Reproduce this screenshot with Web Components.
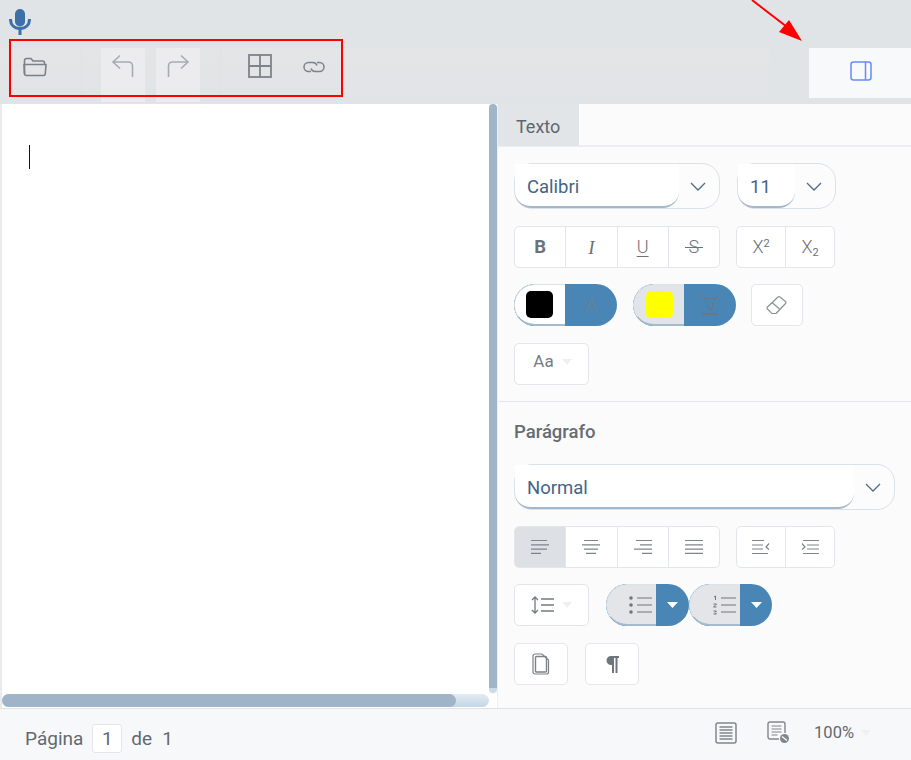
<!DOCTYPE html>
<html lang="pt">
<head>
<meta charset="utf-8">
<title>Editor</title>
<style>
  html, body { margin: 0; padding: 0; height: 100%; background: #e1e4e7; font-family: Roboto, "Liberation Sans", sans-serif; }
</style>
</head>
<body>
<doc-app></doc-app>

<script>
// shared look of the small square icons
const ICONS = {
    mic: '<svg width="22" height="26" viewBox="0 0 22 26"><rect x="6" y="0" width="10" height="17.500" rx="5" fill="#3d70a8"/><path d="M1.500 10c0 6 4 9.500 9.500 9.500s9.500-3.500 9.500-9.500" fill="none" stroke="#3d70a8" stroke-width="3"/><path d="M11 19v7" stroke="#3d70a8" stroke-width="3"/></svg>',
    folder: '<svg width="24" height="20" viewBox="0 0 24 20" fill="none" stroke="#7b8189" stroke-width="1.6" stroke-linejoin="round"><path d="M1.500 17V3.500A2 2 0 0 1 3.500 1.500h4.500l2 2.500h9.500a2 2 0 0 1 2 2V7"/><path d="M1 7.500h22l-.7 9a2 2 0 0 1-2 2H3.500a2 2 0 0 1-2-2z"/></svg>',
    undo: '<svg width="24" height="24" viewBox="0 0 24 24" fill="none" stroke="#a6abb0" stroke-width="1.600"><path d="M9 1.500L2 8l7 6.500"/><path d="M2 8h15.500a4 4 0 0 1 4 4v11"/></svg>',
    redo: '<svg width="24" height="24" viewBox="0 0 24 24" fill="none" stroke="#a6abb0" stroke-width="1.600"><path d="M15 1.500L22 8l-7 6.500"/><path d="M22 8H6.500a4 4 0 0 0-4 4v11"/></svg>',
    table: '<svg width="24" height="24" viewBox="0 0 24 24" fill="none" stroke="#7d8389" stroke-width="1.800"><rect x="1" y="1" width="22" height="22"/><path d="M12 1v22M1 12h22"/></svg>',
    link: '<svg width="22" height="12" viewBox="0 0 22 12" fill="none" stroke="#7d8389" stroke-width="1.500"><path d="M8 10.500H5.500a4.500 4.500 0 0 1 0-9H10a4.500 4.500 0 0 1 4 3"/><path d="M14 1.500h2.500a4.500 4.500 0 0 1 0 9H12a4.500 4.500 0 0 1-4-3"/></svg>',
    panel: '<svg width="22" height="20" viewBox="0 0 22 20" fill="none" stroke="#668bfa" stroke-width="1.500"><rect x="1" y="1" width="20" height="18" rx="2.500"/><path d="M15.500 1v18"/></svg>',
    chevron: '<svg width="16" height="9" viewBox="0 0 16 9" fill="none" stroke="#4f6b85" stroke-width="1.300"><path d="M1 1l7 7 7-7"/></svg>',
    eraser: '<svg width="22" height="20" viewBox="0 0 22 20" fill="none" stroke="#8a8f96" stroke-width="1.200" stroke-linejoin="round"><path d="M1.500 12L12 2a1.500 1.500 0 0 1 2 0l5.500 4.500a1.500 1.500 0 0 1 0 2L10 18.500H6.500a1.500 1.500 0 0 1-1-.4L1.500 14a1.500 1.500 0 0 1 0-2z"/><path d="M6 7.500l7.500 6.500"/></svg>',
    highlight: '<svg width="18" height="22" viewBox="0 0 18 22" fill="none" stroke="#6c7680" stroke-width="1"><path d="M1 0c0 3 2 4.500 4 4.500h8c2 0 4-1.500 4-4.500"/><path d="M4 4.500l2.500 5.500v4h5v-4L14 4.500"/><path d="M7.500 14l1.500 2.500 1.500-2.500"/><path d="M1 20h16" stroke-width="2.200"/></svg>',
    lines: (rows) => '<svg width="18" height="16" viewBox="0 0 18 16" stroke="#7f858b" stroke-width="1.200">' + rows.map((r, i) => `<path d="M${r[0]} ${1.500 + i * 4.300}H${r[1]}"/>`).join('') + '</svg>',
    outdent: '<svg width="18" height="16" viewBox="0 0 18 16" fill="none" stroke="#7f858b" stroke-width="1.200"><path d="M0 1.500h12M0 6h11M0 10h11M0 14.500h16"/><path d="M17 4.500L14 8l3 2.500" /></svg>',
    indent: '<svg width="18" height="16" viewBox="0 0 18 16" fill="none" stroke="#7f858b" stroke-width="1.200"><path d="M2 1.500h16M6 6h12M6 10h12M2 14.500h16"/><path d="M1 4.500L4 8l-3 2.500"/></svg>',
    spacing: '<svg width="24" height="18" viewBox="0 0 24 18" fill="none" stroke="#737a82" stroke-width="1.300"><path d="M4 1v16M1 4l3-3 3 3M1 14l3 3 3-3"/><path d="M10 3h13M10 9h13M10 15h13" stroke-width="1.600"/></svg>',
    bullets: '<svg width="24" height="20" viewBox="0 0 24 20" stroke="#6f767d" stroke-width="1.200"><circle cx="3" cy="3" r="1.800" fill="#6f767d" stroke="none"/><circle cx="3" cy="10" r="1.800" fill="#6f767d" stroke="none"/><circle cx="3" cy="17" r="1.800" fill="#6f767d" stroke="none"/><path d="M9 3h15M9 10h15M9 17h15"/></svg>',
    numbers: '<svg width="24" height="20" viewBox="0 0 24 20" stroke="#6f767d" stroke-width="1.200" fill="none"><path d="M2 2l1.500-1v4M1.500 9h3l-3 3h3M1.500 16h3l-1.500 1.500 1.500 1.500h-3" stroke-width="1"/><path d="M9 3h15M9 10h15M9 17h15"/></svg>',
    pages: '<svg width="18" height="22" viewBox="0 0 18 22" fill="none" stroke="#7d838a" stroke-width="1.200"><path d="M1 3a2 2 0 0 1 2-2h7l6.500 6v12a2 2 0 0 1-2 2H3a2 2 0 0 1-2-2z"/><rect x="3.500" y="3.500" width="11" height="15.500" rx="1" stroke-width="1.400"/></svg>',
    pilcrow: '<svg width="14" height="18" viewBox="0 0 14 18"><path d="M6 1h8v2h-1.500v15H10.500V3H9v15H7V10H6A4.500 4.500 0 0 1 6 1z" fill="#6e757c"/></svg>',
    caret: '<svg width="11" height="6" viewBox="0 0 11 6"><path d="M0 0h11L5.500 6z" fill="#fff"/></svg>',
    fadeCaret: '<svg width="10" height="6" viewBox="0 0 10 6"><path d="M0 0h10L5 6z" fill="#eef0f2"/></svg>',
    printLayout: '<svg width="22" height="22" viewBox="0 0 22 22" fill="none" stroke="#80868c"><rect x="1" y="1" width="20" height="20" rx="2" stroke-width="1.500"/><path d="M4.500 5h13M4.500 8h13M4.500 11h13M4.500 14h13M4.500 17h13" stroke-width="1.400"/></svg>',
    webLayout: '<svg width="23" height="23" viewBox="0 0 23 23" fill="none" stroke="#80868c"><path d="M12 18H3a2 2 0 0 1-2-2V3a2 2 0 0 1 2-2h13a2 2 0 0 1 2 2v9" stroke-width="1.400"/><path d="M4.500 5h10M4.500 8h10M4.500 11h10M4.500 14h6" stroke-width="1.200"/><circle cx="17.500" cy="17.500" r="4.500" fill="#80868c" stroke="none"/><path d="M15 15.500l5 4" stroke="#fff" stroke-width="1.200"/></svg>'
};

class DocApp extends HTMLElement {
    constructor() {
        super();
        this.attachShadow({ mode: 'open' });
        this.shadowRoot.innerHTML = `
            <style>
                :host { display: flex; flex-direction: column; position: relative; width: 911px; height: 760px; overflow: hidden; }
                .body { display: flex; height: 604px; }
                .annot-box { position: absolute; left: 9px; top: 39px; width: 330px; height: 54px; border: 2px solid #f00; }
                .annot-arrow { position: absolute; left: 745px; top: 0; }
            </style>
            <doc-toolbar></doc-toolbar>
            <div class="body">
                <doc-editor></doc-editor>
                <doc-panel></doc-panel>
            </div>
            <doc-status></doc-status>
            <div class="annot-box"></div>
            <svg class="annot-arrow" width="62" height="44" viewBox="0 0 62 44">
                <path d="M7 0L46 30" stroke="#f00" stroke-width="2"/>
                <path d="M57 41L34 32L44 20z" fill="#f00"/>
            </svg>
        `;
    }
}

class DocToolbar extends HTMLElement {
    constructor() {
        super();
        this.attachShadow({ mode: 'open' });
        this.shadowRoot.innerHTML = `
            <style>
                :host { display: block; height: 104px; background: #e1e4e7; }
                .mic { height: 48px; padding: 9px 0 0 9px; box-sizing: border-box; line-height: 0; }
                .row { display: flex; height: 50px; }
                .band { display: flex; align-items: flex-start; width: 769px; height: 50px; background: linear-gradient(#e4e5e6 0, #e3e4e6 40%, #e1e4e7 100%); }
                .tool { display: flex; align-items: flex-start; justify-content: center; height: 54px; box-sizing: border-box; line-height: 0; }
                .off { background: #ececee; width: 44px; padding-top: 6px; }
                .sep { width: 1px; height: 50px; background: #dfe1e3; }
                .toggle { margin-left: 40px; width: 102px; height: 50px; box-sizing: border-box; padding: 0 0 4px 2px; display: flex; align-items: center; justify-content: center; background: #f8f9fb; line-height: 0; }
            </style>
            <div class="mic">${ICONS.mic}</div>
            <div class="row">
                <div class="band">
                    <div class="tool" style="width:69px;padding-top:9px">${ICONS.folder}</div>
                    <div class="sep" style="margin-left:12px"></div>
                    <div class="tool off" style="margin-left:19px">${ICONS.undo}</div>
                    <div class="tool off" style="margin-left:11px">${ICONS.redo}</div>
                    <div class="sep" style="margin-left:20px"></div>
                    <div class="tool" style="width:78px;padding-top:6px">${ICONS.table}</div>
                    <div class="tool" style="width:30px;padding-top:13px">${ICONS.link}</div>
                </div>
                <div class="toggle">${ICONS.panel}</div>
            </div>
        `;
    }
}

class DocEditor extends HTMLElement {
    constructor() {
        super();
        this.attachShadow({ mode: 'open' });
        this.shadowRoot.innerHTML = `
            <style>
                :host { display: flex; flex-direction: column; width: 498px; background: #e9ebee; box-sizing: border-box; padding-left: 2px; border-right: 1px solid #eceef0; }
                .top { display: flex; height: 590px; flex: none; }
                .page { width: 487px; background: #fff; padding: 41px 0 0 27px; box-sizing: border-box; }
                .cursor { width: 1px; height: 24px; background: #111; }
                .gutter { width: 8px; background: #fafafb; }
                .vbar { width: 8px; height: 589px; background: linear-gradient(#a0b5c7 0, #a0b5c7 584px, #cbdbe7 584px); border-radius: 4px; }
                .bottom { flex: 1; display: flex; flex-direction: column; background: #fff; }
                .track { display: flex; width: 487px; height: 13px; flex: none; background: linear-gradient(#e3ecf3, #c3d5e4); border-radius: 7px; }
                .thumb { width: 454px; height: 13px; background: #9fb4c6; border-radius: 7px; }
                .wrap { display: flex; flex: 1; }
            </style>
            <div class="top">
                <div class="page"><div class="cursor"></div></div>
                <div class="gutter"><div class="vbar"></div></div>
            </div>
            <div class="bottom">
                <div class="wrap"><div class="track"><div class="thumb"></div></div></div>
            </div>
        `;
    }
}

class DocSelect extends HTMLElement {
    constructor() {
        super();
        this.attachShadow({ mode: 'open' });
        const w = this.getAttribute('width');
        const fw = this.getAttribute('field');
        this.shadowRoot.innerHTML = `
            <style>
                :host { display: block; width: ${w}px; height: 46px; box-sizing: border-box; border: 1px solid #dbe1e8; border-radius: 18px; background: #fcfcfd; position: relative; }
                .field { width: ${fw}px; height: 44px; box-sizing: border-box; padding: 11.500px 0 0 12px; font-size: 18.500px; line-height: 22px; color: #446486; border-bottom: 2px solid #a3b8cb; border-radius: 0 0 16px 16px; background: #fff; }
                .chev { position: absolute; right: 13px; top: 18px; line-height: 0; }
            </style>
            <div class="field"><slot></slot></div>
            <div class="chev">${ICONS.chevron}</div>
        `;
    }
}

class DocGroup extends HTMLElement {
    constructor() {
        super();
        this.attachShadow({ mode: 'open' });
        this.shadowRoot.innerHTML = `
            <style>
                :host { display: flex; height: 42px; box-sizing: border-box; border: 1px solid #e3e6ea; border-radius: 5px; background: #fff; overflow: hidden; }
            </style>
            <slot></slot>
        `;
    }
}

class DocBtn extends HTMLElement {
    constructor() {
        super();
        this.attachShadow({ mode: 'open' });
        this.shadowRoot.innerHTML = `
            <style>
                :host { display: flex; align-items: center; justify-content: center; flex: 1; min-width: 0; height: 100%; border-left: 1px solid #e3e6ea; color: #6b7279; font-size: 18px; font-weight: 300; line-height: 1; }
                :host(:first-child) { border-left: 0; }
                :host([active]) { background: #dde0e4; }
            </style>
            <slot></slot>
        `;
    }
}

// blue split pill: colour swatch or list icon on the left, blue part on the right
class DocPill extends HTMLElement {
    constructor() {
        super();
        this.attachShadow({ mode: 'open' });
        const leftW = this.getAttribute('left');
        const w = this.getAttribute('width');
        this.shadowRoot.innerHTML = `
            <style>
                :host { display: flex; width: ${w}px; height: 42px; border-radius: 21px; overflow: hidden; background: #4a86b5; }
                .l { width: ${leftW}px; flex: none; box-sizing: border-box; display: flex; align-items: center; justify-content: var(--left-align, center); padding-right: var(--left-pad, 0); border: 1px solid #dfe3e8; border-right: 0; border-bottom: 2px solid #a5bacc; border-radius: 21px 0 0 21px; background: var(--left-bg, #fff); line-height: 0; }
                .r { flex: 1; display: flex; align-items: center; justify-content: center; color: #6e7f8e; font-size: 19px; font-weight: 300; line-height: 0; }
            </style>
            <div class="l"><slot name="left"></slot></div>
            <div class="r"><slot name="right"></slot></div>
        `;
    }
}

class DocPanel extends HTMLElement {
    constructor() {
        super();
        this.attachShadow({ mode: 'open' });
        const swatch = (c) => `<span slot="left" style="display:block;width:27px;height:27px;border-radius:5px;background:${c}"></span>`;
        const cell = (svg, attr) => `<doc-btn ${attr || ''}>${svg}</doc-btn>`;
        this.shadowRoot.innerHTML = `
            <style>
                :host { display: flex; flex-direction: column; flex: 1; background: #fbfbfc; font-family: Roboto, "Liberation Sans", sans-serif; }
                .tabs { height: 43px; flex: none; box-sizing: border-box; border-bottom: 2px solid #eceef1; }
                .tab { width: 81px; height: 42px; box-sizing: border-box; background: #e2e5e8; color: #5f666e; font-size: 18px; line-height: 46px; padding-left: 18px; }
                .sec { padding: 16px 16px 0; display: flex; flex-direction: column; }
                .sec.one { height: 255px; flex: none; box-sizing: border-box; border-bottom: 1px solid #e3e6ea; }
                .row { display: flex; flex: none; }
                h2 { margin: 0; font-size: 18.500px; line-height: 20px; font-weight: 500; color: #666c73; height: 46px; padding-top: 4px; box-sizing: border-box; }
                .box { flex: none; height: 42px; box-sizing: border-box; border: 1px solid #e3e6ea; border-radius: 5px; background: #fff; display: flex; align-items: center; justify-content: center; line-height: 0; color: #7a8087; }
                .strike { display: inline-block; padding: 0 4px; background: linear-gradient(#6b7279, #6b7279) center 55% / 100% 1px no-repeat; }
            </style>
            <div class="tabs"><div class="tab">Texto</div></div>
            <div class="sec one">
                <div class="row" style="gap:17px">
                    <doc-select width="206" field="164">Calibri</doc-select>
                    <doc-select width="99" field="57">11</doc-select>
                </div>
                <div class="row" style="margin-top:17px;gap:16px">
                    <doc-group style="width:206px">
                        <doc-btn><b style="font-weight:700;font-size:18.500px">B</b></doc-btn>
                        <doc-btn><i style="font-family:'Liberation Serif',serif;font-size:19px">I</i></doc-btn>
                        <doc-btn><u style="text-underline-offset:3px">U</u></doc-btn>
                        <doc-btn><span class="strike">S</span></doc-btn>
                    </doc-group>
                    <doc-group style="width:99px">
                        <doc-btn><span>X<sup style="font-size:11px;vertical-align:6px;line-height:0;font-weight:400">2</sup></span></doc-btn>
                        <doc-btn><span>X<sub style="font-size:11px;vertical-align:-3px;line-height:0;font-weight:400">2</sub></span></doc-btn>
                    </doc-group>
                </div>
                <div class="row" style="margin-top:16px">
                    <doc-pill width="103" left="51" style="--left-pad:2px">${swatch('#000')}<span slot="right">A</span></doc-pill>
                    <doc-pill width="103" left="51" style="margin-left:16px;--left-bg:#e1e4e8">${swatch('#ff0')}<span slot="right">${ICONS.highlight}</span></doc-pill>
                    <div class="box" style="width:52px;margin-left:15px">${ICONS.eraser}</div>
                </div>
                <div class="row" style="margin-top:17px">
                    <div class="box" style="width:75px;font-size:17px;line-height:1;gap:8px;padding:0 0 5px 2px;color:#777d84">Aa${ICONS.fadeCaret}</div>
                </div>
            </div>
            <div class="sec">
                <h2>Parágrafo</h2>
                <doc-select width="381" field="339" style="height:46px">Normal</doc-select>
                <div class="row" style="margin-top:16px;gap:16px">
                    <doc-group style="width:206px">
                        ${cell(ICONS.lines([[0,16],[0,18],[0,16],[0,10]]), 'active')}
                        ${cell(ICONS.lines([[2,16],[0,18],[2,16],[4,14]]))}
                        ${cell(ICONS.lines([[2,18],[6,18],[0,18],[8,18]]))}
                        ${cell(ICONS.lines([[0,18],[0,18],[0,18],[0,18]]))}
                    </doc-group>
                    <doc-group style="width:99px">
                        ${cell(ICONS.outdent)}
                        ${cell(ICONS.indent)}
                    </doc-group>
                </div>
                <div class="row" style="margin-top:16px">
                    <div class="box" style="width:75px;gap:7px">${ICONS.spacing}${ICONS.fadeCaret}</div>
                    <doc-pill width="83" left="50" style="margin-left:17px;--left-bg:#e3e5e8;--left-align:flex-end;--left-pad:4px"><span slot="left">${ICONS.bullets}</span><span slot="right">${ICONS.caret}</span></doc-pill>
                    <doc-pill width="83" left="51" style="--left-bg:#e3e5e8;--left-align:flex-end;--left-pad:4px"><span slot="left">${ICONS.numbers}</span><span slot="right">${ICONS.caret}</span></doc-pill>
                </div>
                <div class="row" style="margin-top:17px;gap:17px">
                    <div class="box" style="width:54px">${ICONS.pages}</div>
                    <div class="box" style="width:54px">${ICONS.pilcrow}</div>
                </div>
            </div>
        `;
    }
}

class DocStatus extends HTMLElement {
    constructor() {
        super();
        this.attachShadow({ mode: 'open' });
        this.shadowRoot.innerHTML = `
            <style>
                :host { display: flex; align-items: center; height: 52px; box-sizing: border-box; border-top: 1px solid #e0e3e6; background: #f7f8fa; color: #626970; font-size: 19px; padding: 7px 0 0 25px; font-family: Roboto, "Liberation Sans", sans-serif; }
                .num { width: 30px; height: 29px; box-sizing: border-box; border: 1px solid #e3e6ea; border-radius: 3px; background: #fff; text-align: center; line-height: 27px; margin: 0 9px; }
                .ic { line-height: 0; display: flex; }
                .right { margin-left: auto; display: flex; align-items: center; padding-right: 40px; margin-top: -11px; }
                .zoom { font-size: 16.500px; margin-left: 24px; margin-right: 7px; }
            </style>
            <span>Página</span><span class="num">1</span><span>de</span><span style="margin-left:10px">1</span>
            <div class="right">
                <span class="ic">${ICONS.printLayout}</span>
                <span class="ic" style="margin-left:30px">${ICONS.webLayout}</span>
                <span class="zoom">100%</span>
                <span class="ic">${ICONS.fadeCaret}</span>
            </div>
        `;
    }
}

customElements.define('doc-select', DocSelect);
customElements.define('doc-group', DocGroup);
customElements.define('doc-btn', DocBtn);
customElements.define('doc-pill', DocPill);
customElements.define('doc-toolbar', DocToolbar);
customElements.define('doc-editor', DocEditor);
customElements.define('doc-panel', DocPanel);
customElements.define('doc-status', DocStatus);
customElements.define('doc-app', DocApp);
</script>
</body>
</html>
